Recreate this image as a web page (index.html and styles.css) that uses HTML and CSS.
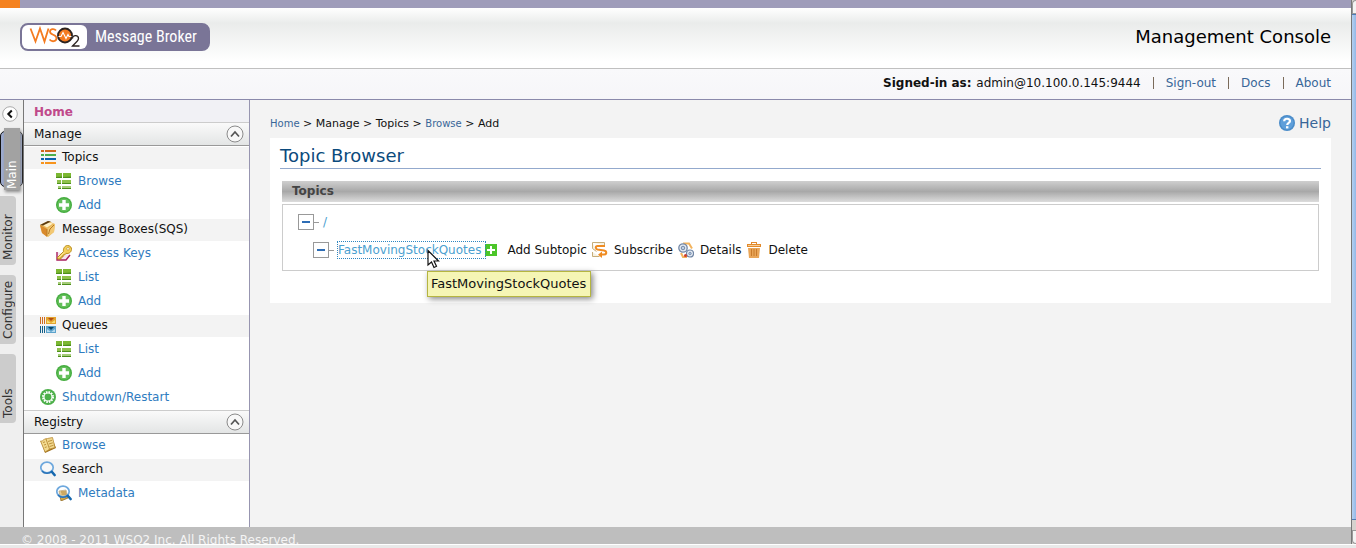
FILE: index.html
```html
<!DOCTYPE html>
<html lang="en">
<head>
<meta charset="utf-8">
<title>WSO2 Message Broker - Management Console</title>
<link rel="stylesheet" href="styles.css">
</head>
<body>
<svg class="defs" aria-hidden="true">
  <defs>
    <symbol id="i-list" viewBox="0 0 16 16">
      <path fill="#7cb832" d="M0 0h6v4H0zM7 0h8v4H7z"/><path fill="#8fc24c" d="M1 7h4v3H1zM6 7h9v3H6z"/><path fill="#a5cc78" d="M2 13h3v2H2zM6 13h9v2H6z"/>
      <path fill="#4d8f1c" d="M0 4l6-.5V5H0zM7 4l8-.5V5H7zM1 10h4v1H1zM6 10h9v1H6zM2 15h3v1H2zM6 15h9v1H6z"/>
    </symbol>
    <symbol id="i-add" viewBox="0 0 16 16"><circle cx="8" cy="8" r="8" fill="#45ad3f"/><circle cx="8" cy="8" r="6.6" fill="#65c05c"/><path fill="#fff" d="M6.3 3h3.4v3.300H13v3.400H9.700V13H6.300V9.700H3V6.300h3.300z"/></symbol>
    <symbol id="i-topics" viewBox="0 0 16 16">
      <path fill="#d2691e" d="M1 1h3v2H1zM5 1h11v2H5z"/><path fill="#4cae4c" d="M1 5h3v2H1zM5 5h11v2H5z"/><path fill="#0b62ae" d="M1 9h3v2H1zM5 9h11v2H5z"/><path fill="#f7941d" d="M1 13h3v2H1zM5 13h11v2H5z"/>
    </symbol>
    <symbol id="i-box" viewBox="0 0 16 16"><path fill="#e9b95c" d="M0 4l8-4 7 3-1 8-6 5-6-4z"/><path fill="#d98a2c" d="M0 4l7 4v8l-5-4z"/><path fill="#f2c873" d="M7 8l8-5-1 8-7 5z"/><path fill="#fff0c4" d="M3 4l6-2.500 4 1L7 6.500z"/><path fill="#5a3a10" d="M0 4l8-4 3 .500L3 4.500z"/><path fill="none" stroke="#b97a24" d="M7 8v7M8.500 13l1.500-5 4-4"/></symbol>
    <symbol id="i-key" viewBox="0 0 16 16"><path fill="#f6e3ee" stroke="#a81e5c" stroke-width="1.400" d="M1 7v8h9l4-5"/><path fill="#f3cf5a" stroke="#b98a1c" d="M1.500 12.500l6-6c-.6-3 1.400-6 4-6 2.700 0 4.200 2 4 4-.3 3-3 4.600-5.500 3.800l-1.500 1.700H7v2H5v2H1.500z"/><circle cx="12" cy="3.800" r="1.300" fill="#fff" stroke="#b98a1c" stroke-width=".6"/><path stroke="#fff2b4" d="M3 12.500l5-5"/></symbol>
    <symbol id="i-queue" viewBox="0 0 16 16">
      <path fill="#d06c1f" d="M0 0h1v7H0zM2 0h1v7H2zM4 0h1v7H4z"/><path fill="#e3a32e" d="M6 0h10v7H6z"/><path fill="#f4df7a" d="M7 3l4 3 4-3v3H7z"/><path fill="#b24d12" d="M8 1h6l-3 3z"/>
      <path fill="#136089" d="M0 9h1v7H0zM2 9h1v7H2zM4 9h1v7H4z"/><path fill="#5da3cc" d="M6 9h10v7H6z"/><path fill="#b9dcef" d="M7 12l4 3 4-3v3H7z"/><path fill="#08476c" d="M8 10h6l-3 3z"/>
    </symbol>
    <symbol id="i-restart" viewBox="0 0 16 16"><circle cx="8" cy="8" r="8" fill="#4db04a"/><circle cx="8" cy="8" r="4.800" fill="none" stroke="#fff" stroke-width="2.400" stroke-dasharray="1.500 1"/><circle cx="8" cy="8" r="4" fill="#4db04a" stroke="#fff" stroke-width="1.100"/></symbol>
    <symbol id="i-book" viewBox="0 0 16 16"><path fill="#a0701c" d="M1 4l4 12 11-5-2-5z"/><path fill="#f2d98e" stroke="#b88b35" stroke-width=".8" d="M.500 4c2 .500 3-1 4-2l3-.500L12.500 .500l2.500 10-5 1.500-5 3z"/><path fill="none" stroke="#b88b35" stroke-width=".9" d="M6 2l3.500 10M8 4.500l4-1.200M8.800 7l4-1.200M9.500 9.500l4-1.200M3 5.500l2-.6M4 8l2-.6M4.800 10.500l2-.6"/></symbol>
    <symbol id="i-search" viewBox="0 0 16 16"><ellipse cx="7" cy="6.500" rx="6.200" ry="5.300" fill="#fff" fill-opacity=".4" stroke="#6ea8dd" stroke-width="1.700"/><path fill="none" stroke="#2a73b8" stroke-width="1.400" d="M2 10c2 3 8 3 10 0"/><path stroke="#1567ae" stroke-width="2.600" stroke-linecap="round" d="M12 11l2.600 3"/></symbol>
    <symbol id="i-meta" viewBox="0 0 16 16"><path fill="#d2a84a" stroke="#8c6520" stroke-width=".7" d="M3 6l7-1 2 8-7 3z"/><use href="#i-search"/><path stroke="#b48632" d="M5 7h5M5.500 9h5"/></symbol>
    <symbol id="i-up" viewBox="0 0 18 18"><circle cx="9" cy="9" r="8" fill="#f8f8f8" stroke="#8b8b8b"/><path fill="none" stroke="#555" stroke-width="1.700" d="M5 11.500l4-4.500 4 4.500"/></symbol>
    <symbol id="i-plus" viewBox="0 0 12 12"><path fill="#4cc629" d="M0 0h12v12H0z"/><path fill="#fff" d="M5 2h2v3h3v2H7v3H5V7H2V5h3z"/></symbol>
    <symbol id="i-subscribe" viewBox="0 0 16 16"><path fill="#f6f1e2" stroke="#c6ad79" d="M.500.500h12v3M.500.500v6l4 3M.500 10v4.500h7"/><path fill="none" stroke="#f08c22" stroke-width="2" d="M13 4H5.500c-2.500 0-2 3 0 3.500L12 8.500c3 .500 3 4 0 4H9"/><path fill="#f08c22" d="M10 9.500v6.500l-4-3.300z"/></symbol>
    <symbol id="i-details" viewBox="0 0 16 16"><path fill="none" stroke="#f3b35c" stroke-width="2" d="M5 1.500h6l3 5M3 11l2 4h4"/><circle cx="5" cy="6" r="4.200" fill="#e7edf5" stroke="#7388a6" stroke-width="1.300"/><circle cx="5" cy="6" r="1.800" fill="#bfd0e5" stroke="#7388a6"/><circle cx="12" cy="11.500" r="3.500" fill="#e7edf5" stroke="#7388a6" stroke-width="1.200"/><circle cx="12" cy="11.500" r="1.300" fill="#a9bfda" stroke="#7388a6" stroke-width=".8"/><circle cx="7.500" cy="13.500" r="1.500" fill="#cf3b2a"/></symbol>
    <symbol id="i-trash" viewBox="0 0 14 16"><path fill="#e28a2c" d="M4 0h6v2h4v3H0V2h4z"/><path fill="#fff" d="M5 1h4v1H5z"/><path fill="#e9a557" d="M1 6h12l-1 10H2z"/><path stroke="#c87a2a" d="M4.500 7v7M7 7v7M9.500 7v7"/><path stroke="#f7ce96" d="M1 3.500h12"/></symbol>
    <symbol id="i-help" viewBox="0 0 16 16"><circle cx="8" cy="8" r="8" fill="#4a8cc9"/><circle cx="8" cy="8" r="6.500" fill="#5f9fda"/><path fill="none" stroke="#fff" stroke-width="2.200" d="M5.200 6.200C5.200 3 11 3 11 6c0 2-2.800 1.800-2.800 4"/><path fill="#fff" d="M7 11.200h2.400v2.200H7z"/></symbol>
  </defs>
</svg>
<div class="window">
  <div class="page">
    <header>
      <div class="topbar"></div>
      <div class="banner">
        <div class="logo">
          <svg class="mark" viewBox="0 0 65 24" role="img" aria-label="WSO2">
            <g fill="none" stroke="#f47b20" stroke-width="1.800"><path d="M8.500 3.500l5 13 4.500-13 4.500 13 4-13"/><path d="M34 5.500c-2-2.500-6-1.500-6 1.200 0 3.500 6.500 2.600 6.500 6.300 0 3.600-4.500 4.300-7 1.500"/></g>
            <circle cx="43" cy="10.500" r="7" fill="#f47b20" stroke="#2b2320" stroke-width="1.900"/>
            <path fill="none" stroke="#fff" stroke-width="1.100" d="M36.500 11.500h2.500l2-4 3 6 2-4 1 2h2.500"/>
            <path fill="none" stroke="#2b2320" stroke-width="1.300" d="M50.500 13.500c0-4 6-3.500 6 0 0 2.500-3 4-6 7.500h7"/>
          </svg>
          <span class="product">Message Broker</span>
        </div>
        <div class="console">Management Console</div>
      </div>
      <div class="session">
        <span><strong>Signed-in as:</strong> admin@10.100.0.145:9444</span><i></i><a href="#">Sign-out</a><i></i><a href="#">Docs</a><i></i><a href="#">About</a>
      </div>
    </header>
    <div class="columns">
      <div class="rail">
        <button class="collapse" aria-label="Collapse menu"><svg viewBox="0 0 16 16"><circle cx="8" cy="8" r="7.300" fill="#fff" stroke="#aaa"/><path fill="none" stroke="#111" stroke-width="2" d="M9.800 4.500L6.300 8l3.500 3.500"/></svg></button>
        <div class="current"><button class="tab"><span>Main</span></button></div>
        <button class="tab"><span>Monitor</span></button>
        <button class="tab"><span>Configure</span></button>
        <button class="tab"><span>Tools</span></button>
      </div>
      <nav class="menu">
        <a class="home" href="#">Home</a>
        <button class="group">Manage<svg><use href="#i-up"/></svg></button>
        <ul>
          <li class="head"><svg><use href="#i-topics"/></svg>Topics</li>
          <li class="sub"><svg><use href="#i-list"/></svg><a href="#">Browse</a></li>
          <li class="sub"><svg><use href="#i-add"/></svg><a href="#">Add</a></li>
          <li class="head"><svg><use href="#i-box"/></svg>Message Boxes(SQS)</li>
          <li class="sub"><svg><use href="#i-key"/></svg><a href="#">Access Keys</a></li>
          <li class="sub"><svg><use href="#i-list"/></svg><a href="#">List</a></li>
          <li class="sub"><svg><use href="#i-add"/></svg><a href="#">Add</a></li>
          <li class="head"><svg><use href="#i-queue"/></svg>Queues</li>
          <li class="sub"><svg><use href="#i-list"/></svg><a href="#">List</a></li>
          <li class="sub"><svg><use href="#i-add"/></svg><a href="#">Add</a></li>
          <li><svg><use href="#i-restart"/></svg><a href="#">Shutdown/Restart</a></li>
        </ul>
        <button class="group">Registry<svg><use href="#i-up"/></svg></button>
        <ul>
          <li><svg><use href="#i-book"/></svg><a href="#">Browse</a></li>
          <li class="head"><svg><use href="#i-search"/></svg>Search</li>
          <li class="sub"><svg><use href="#i-meta"/></svg><a href="#">Metadata</a></li>
        </ul>
      </nav>
      <main>
        <div class="pathbar">
          <div class="crumbs"><a href="#">Home</a> &gt; Manage &gt; Topics &gt; <a href="#">Browse</a> &gt; Add</div>
          <a class="help" href="#"><svg><use href="#i-help"/></svg>Help</a>
        </div>
        <section class="card">
          <h1>Topic Browser</h1>
          <div class="panel">
            <h2>Topics</h2>
            <div class="tree">
              <div class="node"><button class="toggle" aria-label="Collapse"></button><a class="root" href="#">/</a></div>
              <div class="node child">
                <button class="toggle" aria-label="Collapse"></button>
                <a class="topic" href="#">FastMovingStockQuotes
                  <svg class="cursor" viewBox="0 0 13 20"><path fill="#fff" stroke="#111" stroke-width="1.200" d="M1 1.500v14.500l3.500-3 2.500 5.500 2.500-1.200-2.500-5.300h4.500z"/></svg>
                  <span class="tip" role="tooltip">FastMovingStockQuotes</span></a>
                <button class="action add"><svg><use href="#i-plus"/></svg>Add Subtopic</button>
                <button class="action"><svg><use href="#i-subscribe"/></svg>Subscribe</button>
                <button class="action"><svg><use href="#i-details"/></svg>Details</button>
                <button class="action"><svg><use href="#i-trash"/></svg>Delete</button>
              </div>
            </div>
          </div>
        </section>
      </main>
    </div>
    <footer>© 2008 - 2011 WSO2 Inc. All Rights Reserved.</footer>
  </div>
  <div class="scroll"><div class="arrow"></div><div class="thumb"></div><div class="gap"></div><div class="arrow end"></div></div>
  <div class="status"><i></i><i class="ok"></i></div>
</div>
</body>
</html>
```
FILE: styles.css
```css
* { box-sizing: border-box; }
body { margin: 0; font: 12px/16px "DejaVu Sans", sans-serif; color: #111; background: #f3f3f3; }
a { color: #386698; text-decoration: none; }
button { font: inherit; color: inherit; border: 0; padding: 0; background: none; text-align: left; }
svg { display: block; flex: none; }
ul { list-style: none; margin: 0; padding: 0; }
.defs { position: absolute; width: 0; height: 0; }

.window { display: grid; grid-template: minmax(0, 1fr) 4px / minmax(0, 1fr) 5px; height: 100vh; overflow: hidden; }
.page { display: flex; flex-direction: column; min-height: 0; }
.topbar { height: 8px; background: linear-gradient(90deg, #f58220 20px, #9f9cba 20px); }
.banner { display: flex; justify-content: space-between; align-items: flex-start; height: 61px; padding: 15px 20px 0; border-bottom: 1px solid #c0c0c0; background: linear-gradient(#fff, #eaeceb 25%, #fff 90%); }
.logo { display: flex; align-items: center; width: 190px; height: 28px; border: 2px solid #7a7597; border-radius: 8px; background: #7a7597; }
.mark { width: 65px; height: 24px; border-radius: 6px; background: #fff; }
.product { padding-left: 8px; font: 16px/24px "Liberation Sans Narrow", "Roboto Condensed", "Liberation Sans", sans-serif; color: #fff; white-space: nowrap; }
.console { font-size: 18px; line-height: 28px; color: #000; }
.session { display: flex; justify-content: flex-end; align-items: center; height: 31px; padding: 0 20px 2px; border-bottom: 1px solid #8a89ab; background: linear-gradient(#f9f9fb, #f6f6f9); }
.session i { width: 1px; height: 12px; margin: 0 12px; background: #7a6a5a; }
.session strong { margin-right: 1px; }

.columns { display: flex; flex: 1; min-height: 0; }
.rail { display: flex; flex-direction: column; align-items: flex-start; width: 24px; padding-top: 6px; border-right: 1px solid #777; background: #efefef; }
.collapse { margin: 0 0 9px 2px; }
.collapse svg { width: 16px; height: 16px; }
.tab { display: flex; align-items: flex-start; justify-content: center; width: 16px; height: 69px; margin-bottom: 10px; border-radius: 0 4px 4px 0; background: #ccc; color: #333; }
.tab span { width: 16px; height: 100%; padding-top: 5px; writing-mode: vertical-rl; transform: rotate(180deg); line-height: 16px; }
.current { display: flex; justify-content: center; align-items: center; width: 23px; height: 56px; margin-bottom: 9px; border: 1px solid #111; border-radius: 5px; background: #9dabcf; }
.current .tab { height: 62px; flex: none; margin: 0; border-radius: 0; background: #a2a2a2; color: #fff; box-shadow: 1px 2px 3px #888; }
.current .tab span { padding-top: 1px; }

.menu { width: 226px; border-right: 1px solid #9795b0; background: #fff; }
.home { display: block; padding: 4px 10px 2px; font-weight: bold; color: #c0498b; background: #f1f1f5; }
.group { display: flex; align-items: center; justify-content: space-between; width: 100%; height: 24px; padding: 0 5px 0 10px; border-top: 1px solid #ccc; border-bottom: 1px solid #999; background: linear-gradient(#fafafa, #e3e5e5); }
.group svg { width: 18px; height: 18px; }
.menu ul { display: grid; gap: 2px; padding: 1px 0; }
.menu li { display: flex; align-items: center; gap: 6px; height: 22px; padding: 0 0 2px 16px; }
.menu li svg { width: 16px; height: 16px; }
.menu li a { color: #2f7cc0; }
.menu .sub { padding-left: 32px; }
.menu .head { background: #f3f3f3; }

main { flex: 1; min-width: 0; padding: 8px 20px; }
.pathbar { display: flex; justify-content: space-between; align-items: center; height: 30px; }
.crumbs { padding-top: 2px; font-size: 11px; }
.crumbs a { font-size: 10px; }
.help { display: flex; align-items: center; gap: 4px; font-size: 14px; }
.help svg { width: 16px; height: 16px; }
.card { padding: 6px 10px 32px; background: #fff; }
h1 { margin: 0; font-size: 18px; line-height: 24px; font-weight: normal; color: #0b4a7c; border-bottom: 1px solid #93a9cd; }
.panel { padding: 12px 2px 0; }
h2 { margin: 0 0 2px; padding: 0 10px; font-size: 12px; line-height: 21px; color: #444; background: linear-gradient(#cfcfcf, #a8a8a8 50%, #dcdcdc); }
.tree { padding: 8px 15px 11px; border: 1px solid #ccc; }
.node { display: flex; align-items: center; height: 18px; }
.child { margin: 10px 0 0 15px; }
.toggle { position: relative; width: 16px; height: 16px; margin-right: 9px; border: 1px solid #999; background: linear-gradient(#2e6db5, #2e6db5) center / 8px 2px no-repeat; }
.toggle::after { content: ""; position: absolute; left: 15px; top: 7px; width: 5px; height: 1px; background: #999; }
.tree a { color: #4b9fd0; }
.topic { position: relative; padding-right: 4px; outline: 1px dotted #2e86c0; white-space: nowrap; }
.cursor { position: absolute; left: 89px; top: 7px; width: 13px; height: 20px; z-index: 2; }
.tip { position: absolute; left: 89px; top: 29px; padding: 3px 4px 3px 3px; border: 1px solid #b5b541; background: #f5f5b5; color: #111; font-size: 13px; line-height: 18px; box-shadow: 2px 2px 6px #888; }
.action { display: flex; align-items: center; gap: 6px; margin-right: 5px; white-space: nowrap; }
.action svg { width: 16px; height: 16px; }
.add svg { width: 12px; height: 12px; margin-right: 4px; }

footer { flex: none; height: 17px; padding: 5px 21px 0; overflow: hidden; background: #bebebe; color: #f4f4f4; }
.scroll { display: flex; flex-direction: column; border-left: 1px solid #777; background: #d6d2ce; }
.arrow { height: 14px; border: 1px solid #999; border-right: 0; border-radius: 4px 0 0 0; background: #f4f4f4; }
.thumb { flex: 1; border: solid #4f7cb5; border-width: 1px 0; background: linear-gradient(90deg, #b5d0f0, #93b8e6); }
.gap { height: 10px; }
.end { border-radius: 0 0 0 4px; }
.status { grid-column: 1 / -1; display: flex; justify-content: flex-end; gap: 46px; padding: 3px 2px 0 0; border-top: 1px solid #fff; background: #e9e9e9; }
.status i { width: 7px; height: 1px; background: #999; }
.status .ok { background: #6a9a6a; }
```
